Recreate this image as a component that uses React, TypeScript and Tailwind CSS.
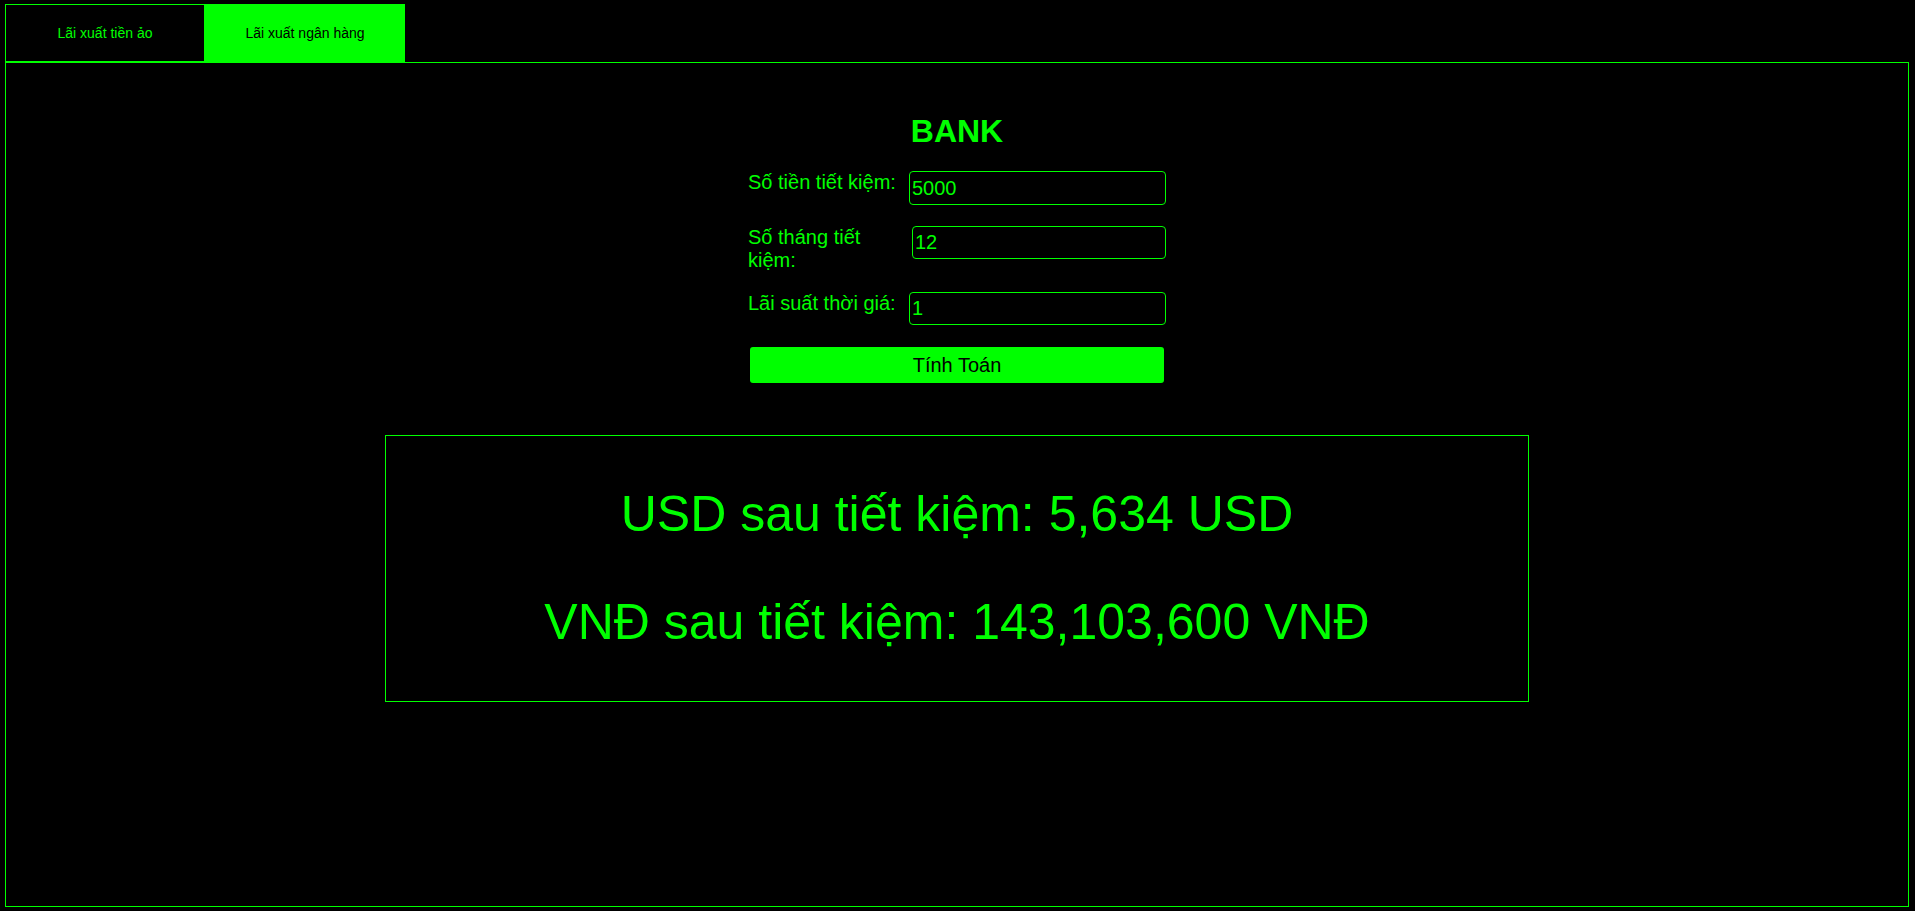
import { useState } from "react";

const GREEN = "text-[#00ff00]";

function Field({
  label,
  value,
  labelClass,
  inputClass,
  className,
}: {
  label: string;
  value: string;
  labelClass?: string;
  inputClass?: string;
  className?: string;
}) {
  return (
    <div className={`flex items-start ${className ?? ""}`}>
      <label className={`text-[20px] leading-[23px] ${GREEN} ${labelClass ?? ""}`}>{label}</label>
      <input
        defaultValue={value}
        className={`ml-auto rounded-[4px] border border-[#00ff00] bg-black px-[2px] text-[20px] text-[#00ff00] outline-none ${
          inputClass ?? "h-[34px] w-[257px]"
        }`}
      />
    </div>
  );
}

export default function App() {
  const [tab, setTab] = useState(1);

  return (
    <div className="min-h-screen bg-black pl-[5px] pr-[6px] pt-[4px] font-['Liberation_Sans',Arial,sans-serif]">
      {/* Tabs */}
      <div className="flex h-[58px]">
        <button
          onClick={() => setTab(0)}
          className={`w-[200px] border border-[#00ff00] text-[14px] ${
            tab === 0 ? "bg-[#00ff00] text-black" : "bg-black text-[#00ff00]"
          }`}
        >
          Lãi xuất tiền ảo
        </button>
        <button
          onClick={() => setTab(1)}
          className={`w-[200px] text-[14px] ${
            tab === 1 ? "bg-[#00ff00] text-black" : "bg-black text-[#00ff00]"
          }`}
        >
          Lãi xuất ngân hàng
        </button>
      </div>

      {/* Panel */}
      <div className="flex h-[845px] flex-col items-center border border-[#00ff00] pt-[50px]">
        <div className="flex w-[418px] flex-col">
          <h1 className={`mb-[21px] text-center text-[32px] font-bold leading-[37px] ${GREEN}`}>BANK</h1>
          <Field label="Số tiền tiết kiệm:" value="5000" className="mb-[21px]" />
          <Field
            label="Số tháng tiết kiệm:"
            value="12"
            labelClass="w-[151px]"
            inputClass="h-[33px] w-[254px]"
            className="mb-[20px]"
          />
          <Field
            label="Lãi suất thời giá:"
            value="1"
            inputClass="h-[33px] w-[257px]"
            className="mb-[22px]"
          />
          <button className="mx-[2px] h-[36px] rounded-[3px] bg-[#00ff00] text-[20px] text-black">
            Tính Toán
          </button>
        </div>

        <div className={`mt-[52px] w-[1144px] border border-[#00ff00] text-center ${GREEN}`}>
          <p className="my-[50px] text-[50px] leading-[57.5px]">USD sau tiết kiệm: 5,634 USD</p>
          <p className="my-[50px] text-[50px] leading-[57.5px]">VNĐ sau tiết kiệm: 143,103,600 VNĐ</p>
        </div>
      </div>
    </div>
  );
}
